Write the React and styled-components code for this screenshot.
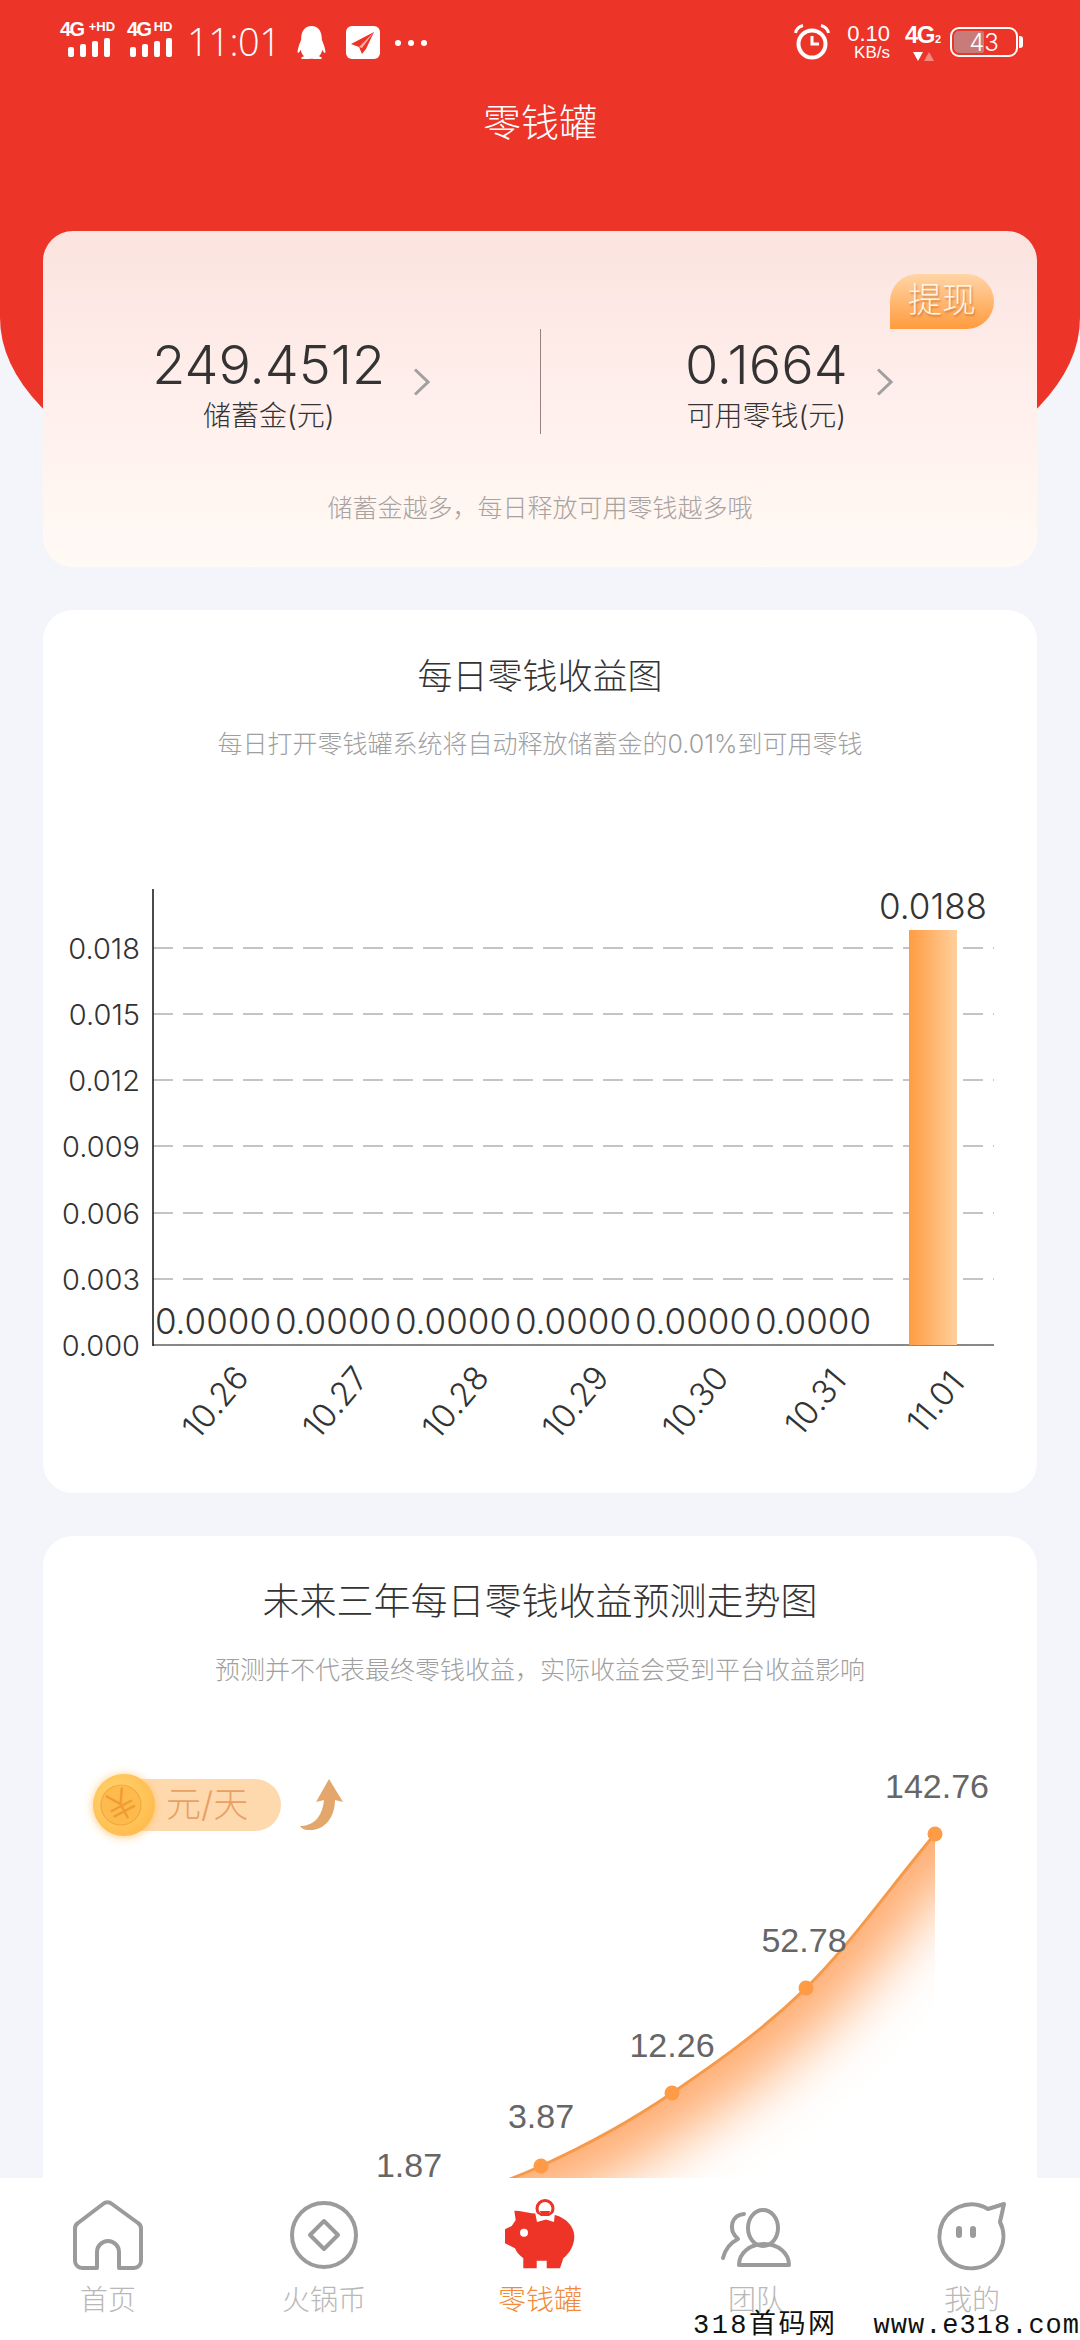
import React from "react";
import styled, { createGlobalStyle } from "styled-components";
import { FaQq } from "react-icons/fa";

const GlobalStyle = createGlobalStyle`
  html, body {
    margin: 0;
    padding: 0;
    background: #f4f5fa;
    font-family: Inter, "Noto Sans CJK SC", sans-serif;
  }
  * { box-sizing: border-box; }
`;

const Page = styled.div`
  position: relative;
  width: 1080px;
  height: 2340px;
  overflow: hidden;
  background: #f4f5fa;
`;

const Hero = styled.header`
  height: 550px;
  background: #ec3428;
  border-radius: 0 0 540px 540px / 0 0 232px 232px;
  color: #fff;
`;

const StatusBar = styled.div`
  display: flex;
  align-items: flex-start;
  height: 62px;
  padding: 21px 62px 0 60px;
`;

const StatusLeft = styled.div`
  display: flex;
  align-items: flex-start;
`;

const StatusRight = styled.div`
  display: flex;
  align-items: flex-start;
  margin-left: auto;
`;

const Signal = styled.div`
  display: flex;
  flex-direction: column;
  align-items: flex-end;
  width: ${(p) => p.$width}px;
  margin-right: ${(p) => p.$gap}px;
`;

const SignalLabel = styled.div`
  display: flex;
  align-items: flex-start;
  align-self: flex-start;
  height: 16px;
  font-family: "Liberation Sans", sans-serif;
  font-size: 20px;
  line-height: 17px;
  font-weight: 700;
  letter-spacing: -1.5px;
  white-space: nowrap;
  sup {
    font-size: 13px;
    line-height: 12px;
    letter-spacing: 0;
    margin-left: ${(p) => p.$supGap}px;
  }
`;

const SignalBars = styled.div`
  display: flex;
  align-items: flex-end;
  gap: 6px;
  height: 20px;
`;

const SignalBar = styled.span`
  width: 6px;
  height: ${(p) => p.$h}px;
  border-radius: 2px;
  background: #fff;
`;

const Time = styled.div`
  width: 108px;
  margin-top: -1px;
  font-family: "Open Sans", sans-serif;
  font-size: 38px;
  line-height: 42px;
  font-weight: 300;
  letter-spacing: -0.5px;
`;

const PlaneBox = styled.div`
  width: 34px;
  height: 33px;
  margin: 5px 0 0 18px;
  border-radius: 6px;
  background: #fff;
  svg {
    display: block;
  }
`;

const Dots = styled.div`
  display: flex;
  gap: 7px;
  margin: 19px 0 0 15px;
  span {
    width: 6px;
    height: 6px;
    border-radius: 50%;
    background: #fff;
  }
`;

const Speed = styled.div`
  width: 45px;
  margin: 3px 15px 0 15px;
  text-align: right;
  font-family: "Liberation Sans", sans-serif;
  font-weight: 400;
  div:first-child {
    font-size: 22px;
    line-height: 20px;
  }
  div:last-child {
    font-size: 17px;
    line-height: 17px;
  }
`;

const Net = styled.div`
  width: 36px;
  margin: 3px 9px 0 0;
  font-family: "Liberation Sans", sans-serif;
  font-weight: 700;
  font-size: 24px;
  line-height: 22px;
  white-space: nowrap;
  letter-spacing: -1.5px;
  sub {
    font-size: 11px;
    vertical-align: baseline;
    letter-spacing: 0;
    margin-left: 1px;
  }
`;

const NetArrows = styled.div`
  display: flex;
  justify-content: center;
  gap: 1px;
  margin-top: 2px;
  svg { display: block; }
`;

const Battery = styled.div`
  position: relative;
  display: flex;
  align-items: center;
  justify-content: center;
  width: 68px;
  height: 30px;
  margin-top: 6px;
  border: 2.5px solid #fff;
  border-radius: 9px;
  font-size: 24px;
  font-weight: 300;
  &::before {
    content: "";
    position: absolute;
    left: 2px;
    top: 2px;
    bottom: 2px;
    width: 30px;
    border-radius: 5px 2px 2px 5px;
    background: #c87c7a;
  }
  &::after {
    content: "";
    position: absolute;
    right: -7px;
    top: 7px;
    width: 4px;
    height: 12px;
    border-radius: 0 3px 3px 0;
    background: #fff;
  }
  span {
    position: relative;
  }
`;

const HeroTitle = styled.h1`
  margin: 35px 0 0;
  text-align: center;
  font-size: 38px;
  line-height: 50px;
  font-weight: 300;
`;

const Stack = styled.main`
  display: flex;
  flex-direction: column;
  gap: 43px;
  margin-top: -319px;
  padding: 0 43px;
`;

const SummaryCard = styled.section`
  position: relative;
  height: 336px;
  padding-top: 98px;
  border-radius: 30px;
  background: linear-gradient(180deg, #fbe3df 0%, #ffefec 50%, #fffaf5 100%);
`;

const Withdraw = styled.div`
  position: absolute;
  top: 43px;
  right: 43px;
  width: 104px;
  height: 55px;
  border-radius: 28px 28px 28px 0;
  background: linear-gradient(180deg, #ffd5a6 0%, #ff9b3e 100%);
  color: #fff4e6;
  font-size: 34px;
  line-height: 52px;
  font-weight: 300;
  text-align: center;
  text-shadow: 1px 2px 2px rgba(190, 100, 40, 0.6);
`;

const Stats = styled.div`
  display: grid;
  grid-template-columns: 1fr 1px 1fr;
  height: 105px;
`;

const Divider = styled.div`
  background: #98827f;
`;

const Stat = styled.div`
  display: flex;
  align-items: center;
  justify-content: center;
  gap: 28px;
`;

const StatText = styled.div`
  padding-top: 8px;
  text-align: center;
  color: #333;
`;

const StatValue = styled.div`
  font-size: 54px;
  line-height: 56px;
  font-weight: 300;
  white-space: nowrap;
`;

const StatLabel = styled.div`
  margin-top: 5px;
  font-size: 28px;
  line-height: 36px;
  font-weight: 300;
  white-space: nowrap;
`;

const Hint = styled.p`
  margin: 56px 0 0;
  text-align: center;
  color: #a8a2a0;
  font-size: 25px;
  line-height: 36px;
  font-weight: 300;
`;

const ChartCard = styled.section`
  position: relative;
  flex: none;
  height: ${(p) => p.$height}px;
  padding-top: 41px;
  border-radius: 30px;
  background: #fff;
`;

const CardTitle = styled.h2`
  margin: 0;
  text-align: center;
  color: #333;
  font-size: ${(p) => p.$size}px;
  line-height: 50px;
  font-weight: 300;
`;

const CardSub = styled.p`
  margin: 25px 0 0;
  text-align: center;
  color: #9f9f9f;
  font-size: 25px;
  line-height: 36px;
  font-weight: 300;
`;

const ChartSvg = styled.svg`
  display: block;
  margin-top: ${(p) => p.$top}px;
`;

const Legend = styled.div`
  position: absolute;
  left: 49px;
  top: 237px;
  display: flex;
  align-items: center;
`;

const LegendCoin = styled.svg`
  position: relative;
  z-index: 1;
  display: block;
  filter: drop-shadow(0 1px 5px rgba(255, 190, 90, 0.8));
`;

const LegendPill = styled.div`
  width: 160px;
  height: 52px;
  margin-left: -35px;
  padding-left: 45px;
  border-radius: 0 26px 26px 0;
  background: #ffd9ae;
  color: #e8a064;
  font-size: 35px;
  line-height: 50px;
  font-weight: 300;
  white-space: nowrap;
`;

const LegendArrow = styled.svg`
  display: block;
  margin-left: 19px;
`;

const TabBar = styled.nav`
  position: absolute;
  left: 0;
  right: 0;
  bottom: 0;
  display: grid;
  grid-template-columns: repeat(5, 1fr);
  height: 162px;
  padding-top: 22px;
  background: #fff;
`;

const Tab = styled.div`
  display: flex;
  flex-direction: column;
  align-items: center;
  color: ${(p) => (p.$active ? "#f08a3c" : "#b8b8b8")};
`;

const TabIcon = styled.svg`
  display: block;
  width: 72px;
  height: 72px;
`;

const TabLabel = styled.span`
  margin-top: 10px;
  font-size: 28px;
  line-height: 36px;
  font-weight: 300;
`;

const Watermark = styled.div`
  position: absolute;
  right: 0;
  bottom: -2px;
  display: flex;
  gap: 36px;
  color: #111;
  font-family: "Liberation Mono", "Noto Sans CJK SC", monospace;
  font-size: 27px;
  line-height: 32px;
  letter-spacing: 1px;
  white-space: nowrap;
`;

const WatermarkName = styled.span`
  letter-spacing: 2.5px;
`;

const yTicks = [
  ["0.018", 948],
  ["0.015", 1014],
  ["0.012", 1080],
  ["0.009", 1146],
  ["0.006", 1213],
  ["0.003", 1279],
  ["0.000", 1345],
];

const days = [
  ["10.26", 0.0],
  ["10.27", 0.0],
  ["10.28", 0.0],
  ["10.29", 0.0],
  ["10.30", 0.0],
  ["10.31", 0.0],
  ["11.01", 0.0188],
];

const forecast = [
  { x: 409, y: 2212, label: "1.87", lx: 409, ly: 2177 },
  { x: 541, y: 2166, label: "3.87", lx: 541, ly: 2128 },
  { x: 672, y: 2093, label: "12.26", lx: 672, ly: 2057 },
  { x: 806, y: 1988, label: "52.78", lx: 804, ly: 1952 },
  { x: 935, y: 1834, label: "142.76", lx: 937, ly: 1798 },
];

const curve =
  "M409 2212 C453 2199 497 2186 541 2166 C585 2146 628 2123 672 2093 C716 2063 762 2031 806 1988 C850 1945 892 1885 935 1834";

const DailyChart = () => (
  <ChartSvg $top={98} width="994" height="620" viewBox="43 860 994 620">
    <defs>
      <linearGradient id="barFill" x1="0" y1="0" x2="1" y2="0">
        <stop offset="0" stopColor="#ff9c42" />
        <stop offset="1" stopColor="#ffd09c" />
      </linearGradient>
    </defs>
    {yTicks.map(([label, y]) => (
      <g key={label}>
        <line x1="153" x2="994" y1={y} y2={y} stroke={label === "0.000" ? "#111" : "#8a8a8a"} strokeWidth="1.2" strokeDasharray={label === "0.000" ? "" : "20 10"} />
        {label === "0.000" && (
          <line x1="153" x2="994" y1={y} y2={y} stroke="#8a8a8a" strokeWidth="1.4" strokeDasharray="20 10" />
        )}
        <text x="140" y={y + 11} textAnchor="end" fontFamily="Inter" fontSize="29" fontWeight="300" fill="#333">
          {label}
        </text>
      </g>
    ))}
    <line x1="153" x2="153" y1="889" y2="1346" stroke="#111" strokeWidth="1.5" />
    <rect x="909" y="930" width="48" height="415" fill="url(#barFill)" />
    {days.map(([day, value], i) => {
      const cx = 213 + i * 120;
      const lx = cx + 2;
      return (
        <g key={day}>
          <text x={cx} y={value ? 919 : 1334} textAnchor="middle" fontFamily="Inter" fontSize="35" fontWeight="300" fill="#333">
            {value.toFixed(4)}
          </text>
          <text x={lx} y={1402} textAnchor="middle" dominantBaseline="central" transform={`rotate(-50 ${lx} 1402)`} fontFamily="Inter" fontSize="33" fontWeight="300" fill="#333">
            {day}
          </text>
        </g>
      );
    })}
  </ChartSvg>
);

const ForecastChart = () => (
  <ChartSvg $top={12} width="994" height="640" viewBox="43 1700 994 640">
    <defs>
      <clipPath id="areaClip">
        <path d={`${curve} L935 2340 L409 2340 Z`} />
      </clipPath>
      <filter id="fade" x="-30%" y="-30%" width="160%" height="160%">
        <feGaussianBlur stdDeviation="30" />
      </filter>
    </defs>
    <g clipPath="url(#areaClip)">
      <rect x="400" y="1800" width="560" height="560" fill="#ffac70" />
      <path d={`${curve} L1100 1834 L1100 2500 L409 2500 Z`} transform="translate(22 34)" fill="#fff" filter="url(#fade)" />
    </g>
    <path d={curve} fill="none" stroke="#f59a4b" strokeWidth="3" />
    {forecast.map((p) => (
      <g key={p.label}>
        <circle cx={p.x} cy={p.y} r="7.5" fill="#ff9a47" />
        <text x={p.lx} y={p.ly} textAnchor="middle" fontFamily="Liberation Sans" fontSize="34" fill="#666">
          {p.label}
        </text>
      </g>
    ))}
  </ChartSvg>
);

const HomeIcon = () => (
  <TabIcon viewBox="0 0 72 72" fill="none" stroke="#9b9b9b" strokeWidth="4" strokeLinejoin="round">
    <path d="M25 68 H10 a7 7 0 0 1 -7 -7 V29 a7 7 0 0 1 3 -6 L31 4 a7 7 0 0 1 9 0 L66 23 a7 7 0 0 1 3 6 V61 a7 7 0 0 1 -7 7 H47 V52 a11 11 0 0 0 -22 0 Z" />
  </TabIcon>
);

const CoinIcon = () => (
  <TabIcon viewBox="0 0 72 72" fill="none" stroke="#9b9b9b" strokeWidth="4" strokeLinejoin="round">
    <circle cx="36" cy="35" r="32" />
    <path d="M36 21 L50 35 L36 49 L22 35 Z" />
  </TabIcon>
);

const PigIcon = () => (
  <TabIcon viewBox="0 0 72 72" style={{ overflow: "visible" }}>
    <circle cx="41" cy="8.5" r="8" fill="none" stroke="#ee3327" strokeWidth="3" />
    <path
      d="M10.3 10.7 C17 11 22 12 27.7 13.3 L51 15 C62 18 70 26 70.3 36 C70.5 45 66 53 59.3 58.3 L56 68.3 H42.7 V60.7 H32.7 V68.3 H19.3 V58.3 C15 55 12.5 52 11 48.3 L1 43.3 V29.3 L7.7 26 L11.7 20 Z"
      fill="#ee3327"
    />
    <path d="M31 12 L37 16 H45 L51 12 L50 22 L42 19.5 L33 22 Z" fill="#fff" />
    <path d="M36 11 H46 L45 15 H37 Z" fill="#ee3327" />
    <circle cx="20" cy="32.7" r="4" fill="#fff" />
  </TabIcon>
);

const TeamIcon = () => (
  <TabIcon viewBox="0 0 72 72" fill="none" stroke="#9b9b9b" strokeWidth="4" strokeLinejoin="round" strokeLinecap="round">
    <ellipse cx="43" cy="28" rx="15" ry="18" />
    <path d="M19 65 C19 53 30 44 44 44 C58 44 69 53 69 65 Z" />
    <path d="M24 14 C12 15 7 29 18 39 C10 43 5 50 3 58" />
  </TabIcon>
);

const MineIcon = () => (
  <TabIcon viewBox="0 0 72 72" fill="none" stroke="#9b9b9b" strokeWidth="4" strokeLinejoin="round">
    <path d="M68 4 L52 9 A32 32 0 1 0 64 22 Z" />
    <rect x="20" y="26" width="6" height="12" rx="3" fill="#9b9b9b" stroke="none" />
    <rect x="34" y="26" width="6" height="12" rx="3" fill="#9b9b9b" stroke="none" />
  </TabIcon>
);

const tabs = [
  { label: "首页", Icon: HomeIcon },
  { label: "火锅币", Icon: CoinIcon },
  { label: "零钱罐", Icon: PigIcon, active: true },
  { label: "团队", Icon: TeamIcon },
  { label: "我的", Icon: MineIcon },
];

const Chevron = () => (
  <svg width="17" height="28" viewBox="0 0 17 28" fill="none" stroke="#a0a0a0" strokeWidth="3">
    <path d="M2 1.5 L15 14 L2 26.5" />
  </svg>
);

const App = () => {
  return (
    <Page>
      <GlobalStyle />
      <Hero>
        <StatusBar>
          <StatusLeft>
            <Signal $width={50} $gap={17}>
              <SignalLabel $supGap={5}>4G<sup>+HD</sup></SignalLabel>
              <SignalBars>
                <SignalBar $h={10} />
                <SignalBar $h={13} />
                <SignalBar $h={16} />
                <SignalBar $h={19} />
              </SignalBars>
            </Signal>
            <Signal $width={45} $gap={15}>
              <SignalLabel $supGap={3}>4G<sup>HD</sup></SignalLabel>
              <SignalBars>
                <SignalBar $h={10} />
                <SignalBar $h={13} />
                <SignalBar $h={16} />
                <SignalBar $h={19} />
              </SignalBars>
            </Signal>
            <Time>11:01</Time>
            <FaQq size={33} color="#fff" style={{ marginTop: 5 }} />
            <PlaneBox>
              <svg width="34" height="33" viewBox="0 0 34 33">
                <path d="M28 6 L5 18 L13 21 L16 28 L20 23 Z" fill="#ee3327" />
                <path d="M28 6 L13 21 L16 22 Z" fill="#f9b0aa" />
              </svg>
            </PlaneBox>
            <Dots>
              <span />
              <span />
              <span />
            </Dots>
          </StatusLeft>
          <StatusRight>
            <svg width="36" height="36" viewBox="0 0 36 36" fill="none" stroke="#fff" style={{ marginTop: 3 }}>
              <circle cx="18" cy="20" r="13.5" strokeWidth="4" />
              <path d="M18 12 V20 H25" strokeWidth="3" />
              <path d="M1.5 9 C2.5 4.5 5 2.5 9 1.5" strokeWidth="3" />
              <path d="M34.5 9 C33.5 4.5 31 2.5 27 1.5" strokeWidth="3" />
            </svg>
            <Speed>
              <div>0.10</div>
              <div>KB/s</div>
            </Speed>
            <Net>
              4G<sub>2</sub>
              <NetArrows>
                <svg width="10" height="9" viewBox="0 0 10 9"><path d="M0 0 H10 L5 9 Z" fill="#fff" /></svg>
                <svg width="10" height="9" viewBox="0 0 10 9"><path d="M5 0 L10 9 H0 Z" fill="#f7877e" /></svg>
              </NetArrows>
            </Net>
            <Battery>
              <span>43</span>
            </Battery>
          </StatusRight>
        </StatusBar>
        <HeroTitle>零钱罐</HeroTitle>
      </Hero>

      <Stack>
        <SummaryCard>
          <Withdraw>提现</Withdraw>
          <Stats>
            <Stat>
              <StatText>
                <StatValue>249.4512</StatValue>
                <StatLabel>储蓄金(元)</StatLabel>
              </StatText>
              <Chevron />
            </Stat>
            <Divider />
            <Stat>
              <StatText>
                <StatValue>0.1664</StatValue>
                <StatLabel>可用零钱(元)</StatLabel>
              </StatText>
              <Chevron />
            </Stat>
          </Stats>
          <Hint>储蓄金越多，每日释放可用零钱越多哦</Hint>
        </SummaryCard>

        <ChartCard $height={883}>
          <CardTitle $size={35}>每日零钱收益图</CardTitle>
          <CardSub>每日打开零钱罐系统将自动释放储蓄金的0.01%到可用零钱</CardSub>
          <DailyChart />
        </ChartCard>

        <ChartCard $height={804}>
          <CardTitle $size={37}>未来三年每日零钱收益预测走势图</CardTitle>
          <CardSub>预测并不代表最终零钱收益，实际收益会受到平台收益影响</CardSub>
          <Legend>
            <LegendCoin width="64" height="64" viewBox="0 0 64 64">
              <defs>
                <radialGradient id="coinFill" cx="0.4" cy="0.4" r="0.7">
                  <stop offset="0" stopColor="#ffd873" />
                  <stop offset="1" stopColor="#ffb84a" />
                </radialGradient>
              </defs>
              <circle cx="32" cy="32" r="31" fill="url(#coinFill)" />
              <circle cx="29" cy="32" r="20" fill="#fdbb4e" stroke="#f5a73e" strokeWidth="1.2" />
              <path d="M20 17 L29 31 L38 17 M29 31 V47 M17 33 H41 M17 39 H41" fill="none" stroke="#f29c32" strokeWidth="2.5" transform="rotate(-28 29 32)" />
            </LegendCoin>
            <LegendPill>元/天</LegendPill>
            <LegendArrow width="44" height="52" viewBox="0 0 44 52">
              <path d="M29 0 L43 23 L35 21 C35 38 25 52 8 51 C4 51 1 49 0 47 C12 47 22 40 24 21 L16 23 Z" fill="#e3a76b" />
            </LegendArrow>
          </Legend>
          <ForecastChart />
        </ChartCard>
      </Stack>

      <TabBar>
        {tabs.map(({ label, Icon, active }) => (
          <Tab key={label} $active={active}>
            <Icon />
            <TabLabel>{label}</TabLabel>
          </Tab>
        ))}
      </TabBar>
      <Watermark>
        <WatermarkName>318首码网</WatermarkName>
        <span>www.e318.com</span>
      </Watermark>
    </Page>
  );
};

export default App;
